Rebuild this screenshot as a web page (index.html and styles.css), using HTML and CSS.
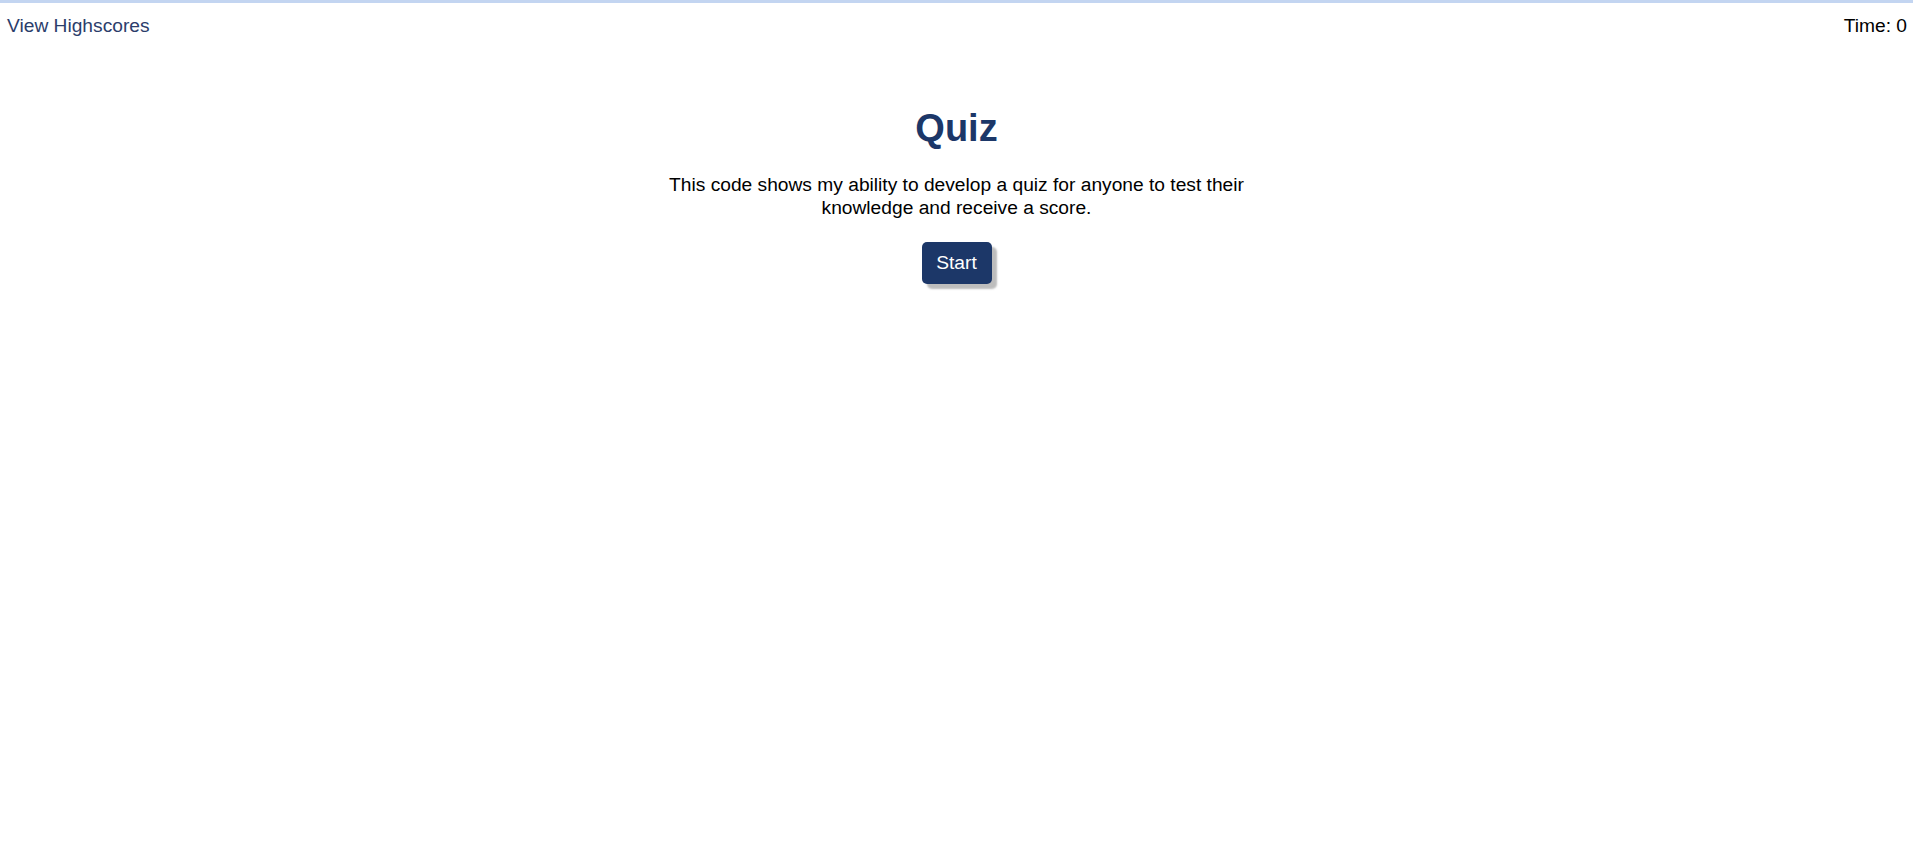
FILE: index.html
```html
<!DOCTYPE html>
<html lang="en">
<head>
<meta charset="utf-8">
<title>Quiz</title>
<link rel="stylesheet" href="styles.css">
</head>
<body>
<header class="topbar">
  <a class="highscores" href="#">View Highscores</a>
  <div class="timer">Time: <span>0</span></div>
</header>
<main class="intro">
  <h1 class="title">Quiz</h1>
  <p class="lead">This code shows my ability to develop a quiz for anyone to test their knowledge and receive a score.</p>
  <button class="start-btn" type="button">Start</button>
</main>
</body>
</html>
```

FILE: styles.css
```css
html, body {
  margin: 0;
  padding: 0;
}
body {
  font-family: "Liberation Sans", Arial, sans-serif;
  font-size: 19.2px;
  color: #000;
  background: #fff;
  border-top: 3px solid #c3d5f1;
}
.topbar {
  display: flex;
  justify-content: space-between;
  align-items: center;
  padding: 12px 6px 0 7px;
}
.highscores {
  color: #2b3d6b;
  text-decoration: none;
}
.timer {
  color: #000;
}
.intro {
  display: flex;
  flex-direction: column;
  align-items: center;
  max-width: 620px;
  margin: 0 auto;
  padding-bottom: 20px;
  text-align: center;
}
.title {
  font-size: 38px;
  font-weight: bold;
  color: #1c3768;
  margin: 70px 0 0;
}
.lead {
  margin: 23px 0 0;
  line-height: 23px;
}
.start-btn {
  margin-top: 23px;
  width: 70px;
  height: 42px;
  font-family: inherit;
  font-size: 19.2px;
  color: #fff;
  background: #1c3768;
  border: none;
  border-radius: 5px;
  box-shadow: 5px 5px 2px #bdbdbd;
  cursor: pointer;
}
```
